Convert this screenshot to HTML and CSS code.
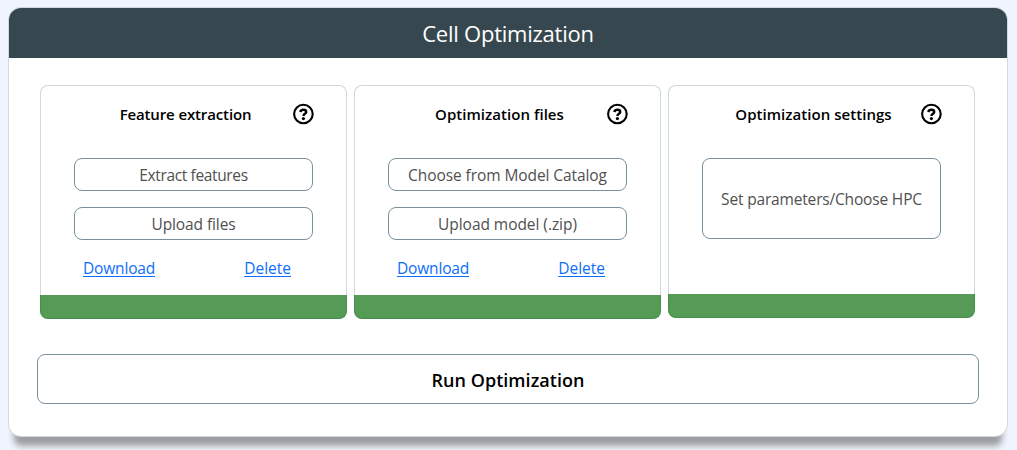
FILE: index.html
```html
<!DOCTYPE html>
<html lang="en">
<head>
<meta charset="utf-8">
<title>Cell Optimization</title>
<link rel="stylesheet" href="styles.css">
</head>
<body>
<svg class="sprite" aria-hidden="true">
  <symbol id="help" viewBox="0 0 22 22">
    <circle cx="11.4" cy="11" r="9.3" fill="none" stroke="#000" stroke-width="2.1"/>
    <path d="M8.2 8.9C8.8 7.5 9.9 6.8 11.3 6.8c1.7 0 2.9.8 2.9 2.1 0 2-2.7 1.9-2.7 4" fill="none" stroke="#000" stroke-width="2.5"/>
    <circle cx="11.4" cy="15.6" r="1.6"/>
  </symbol>
</svg>
<main class="panel">
  <h1 class="panel-title">Cell Optimization</h1>
  <div class="panel-body">
    <div class="cards">
      <section class="card">
        <header class="card-head"><h2 class="t-feature">Feature extraction</h2><svg class="help"><use href="#help"/></svg></header>
        <div class="card-body">
          <button class="btn t-extract">Extract features</button>
          <button class="btn t-upload">Upload files</button>
          <div class="links"><a class="t-download" href="#">Download</a><a href="#">Delete</a></div>
        </div>
        <div class="status"></div>
      </section>
      <section class="card">
        <header class="card-head"><h2>Optimization files</h2><svg class="help"><use href="#help"/></svg></header>
        <div class="card-body">
          <button class="btn t-choose">Choose from Model Catalog</button>
          <button class="btn t-model">Upload model (.zip)</button>
          <div class="links"><a class="t-download" href="#">Download</a><a href="#">Delete</a></div>
        </div>
        <div class="status"></div>
      </section>
      <section class="card card-short">
        <header class="card-head"><h2>Optimization settings</h2><svg class="help"><use href="#help"/></svg></header>
        <div class="card-body">
          <button class="btn btn-tall t-params">Set parameters/Choose HPC</button>
        </div>
        <div class="status"></div>
      </section>
    </div>
    <button class="run">Run Optimization</button>
  </div>
</main>
</body>
</html>
```
FILE: styles.css
```css
* { box-sizing: border-box; }
body {
  margin: 0;
  height: 450px;
  overflow: hidden;
  padding: 7px 9px 0 8px;
  background: #f0f4fe;
  font-family: "Open Sans", "Noto Sans", sans-serif;
  font-size: 16px;
}
.sprite { display: none; }
.panel {
  height: 430px;
  border: 1px solid #cfd8dc;
  border-radius: 13px;
  background: #fff;
  overflow: hidden;
  box-shadow: 0 15px 6px -6px #9b9da1;
}
.panel-title {
  margin: 0;
  height: 50px;
  display: flex;
  align-items: center;
  justify-content: center;
  padding-bottom: 1px;
  background: #37474f;
  color: #fff;
  font-size: 22px;
  font-weight: 400;
  letter-spacing: -0.24px;
}
.panel-body { padding: 27px 28px 0; }
.cards {
  display: flex;
  align-items: flex-start;
  gap: 7px;
  padding: 0 3px;
}
.card {
  flex: none;
  width: 307px;
  height: 234px;
  display: flex;
  flex-direction: column;
  border: 1px solid #cfd8dc;
  border-bottom: 0;
  border-radius: 8px;
}
.card-short { height: 233px; }
.card-head {
  display: grid;
  grid-template-columns: 22px 1fr 22px;
  align-items: center;
  padding: 17px 32px 0 28px;
  height: 39px;
}
.card-head h2 {
  grid-column: 2;
  margin: 0 12px 0 0;
  font-size: 15px;
  font-weight: 600;
  line-height: 22px;
  letter-spacing: 0.04px;
  text-align: center;
  white-space: nowrap;
}
.card-head .t-feature { letter-spacing: -0.13px; }
.help { width: 22px; height: 22px; display: block; }
.card-body {
  flex: 1;
  display: flex;
  flex-direction: column;
  gap: 16px;
  padding: 33px 33px 0;
}
.btn, .run {
  display: flex;
  align-items: center;
  justify-content: center;
  border: 1px solid #78909c;
  border-radius: 8px;
  background: #fff;
  font-family: inherit;
  white-space: nowrap;
}
.btn {
  flex: none;
  height: 33px;
  padding: 1px 0 0;
  color: #505050;
  font-size: 15.5px;
}
.btn-tall { height: 81px; }
.t-extract { letter-spacing: -0.36px; }
.t-upload { letter-spacing: -0.1px; }
.t-choose { letter-spacing: -0.08px; }
.t-model { letter-spacing: -0.05px; }
.t-params { letter-spacing: -0.17px; }
.links {
  display: flex;
  justify-content: space-between;
  padding: 0 22px 0 9px;
  line-height: 24px;
  font-size: 15.5px;
}
.links a { color: #0d6efd; text-underline-offset: 2px; }
.t-download { letter-spacing: -0.17px; }
.status {
  height: 24px;
  margin: 0 -1px;
  border: 1px solid #43904a;
  border-top: 0;
  border-radius: 0 0 8px 8px;
  background: #559a55;
}
.run {
  width: 942px;
  height: 50px;
  margin-top: 35px;
  padding: 1px 0 0;
  color: #000;
  font-size: 18px;
  font-weight: 600;
  letter-spacing: 0.04px;
}
```
